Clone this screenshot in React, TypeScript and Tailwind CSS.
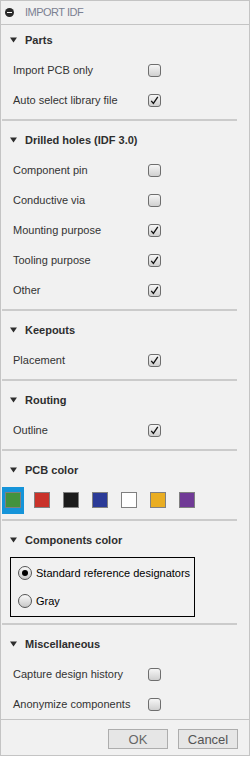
import React from 'react';

const font = { fontFamily: '"Liberation Sans", Arial, sans-serif' };

const Triangle = () => (
  <svg width="7" height="6" viewBox="0 0 7 6" className="mr-[8px]">
    <path d="M0 0.5 L7 0.5 L3.5 5.5 Z" fill="#2e2e2e" />
  </svg>
);

const Checkbox = ({ checked = false }: { checked?: boolean }) => (
  <div className="w-[13px] h-[13px] rounded-[3px] border border-[#6e6e6e] bg-gradient-to-b from-[#f6f6f6] to-[#cfcfcf] flex items-center justify-center">
    {checked && (
      <svg width="11" height="11" viewBox="0 0 11 11">
        <path d="M2.2 5.8 L4.4 8.4 L8.8 1.8" fill="none" stroke="#111" strokeWidth="1.3" />
      </svg>
    )}
  </div>
);

const Radio = ({ checked = false }: { checked?: boolean }) => (
  <div className="w-[14px] h-[14px] rounded-full border border-[#555] bg-gradient-to-b from-[#fafafa] to-[#c8c8c8] flex items-center justify-center">
    {checked && <div className="w-[6px] h-[6px] rounded-full bg-black" />}
  </div>
);

const SectionHeader = ({ title }: { title: string }) => (
  <div className="h-[30px] flex items-center pl-[9px] text-[11px] font-bold text-[#2e2e2e]">
    <Triangle />
    {title}
  </div>
);

const Row = ({ label, checked }: { label: string; checked?: boolean }) => (
  <div className="h-[30px] flex items-center pl-[12px] text-[11px] text-[#333]">
    <span className="w-[135px]">{label}</span>
    <Checkbox checked={checked} />
  </div>
);

const Separator = () => <div className="ml-[1px] my-[4px] w-[235px] h-[2px] bg-[#cbcbcb]" />;

const swatches = ['#43933f', '#c9322a', '#1b1b1b', '#2b3a97', '#ffffff', '#e9ad22', '#703a96'];

export default function App() {
  return (
    <div style={font} className="w-[250px] border border-[#c4c4c4] bg-[#f1f1f1]">
      <div className="h-[24px] border-b border-[#c4c4c4] flex items-center pl-[4px]">
        <div className="w-[9px] h-[9px] rounded-full bg-[#2a2a2a] flex items-center justify-center">
          <div className="w-[5px] h-[1.5px] bg-white" />
        </div>
        <span className="ml-[11px] text-[11px] text-[#7b8092] tracking-[-0.5px]">IMPORT IDF</span>
      </div>

      <SectionHeader title="Parts" />
      <Row label="Import PCB only" />
      <Row label="Auto select library file" checked />
      <Separator />

      <SectionHeader title="Drilled holes (IDF 3.0)" />
      <Row label="Component pin" />
      <Row label="Conductive via" />
      <Row label="Mounting purpose" checked />
      <Row label="Tooling purpose" checked />
      <Row label="Other" checked />
      <Separator />

      <SectionHeader title="Keepouts" />
      <Row label="Placement" checked />
      <Separator />

      <SectionHeader title="Routing" />
      <Row label="Outline" checked />
      <Separator />

      <SectionHeader title="PCB color" />
      <div className="h-[30px] flex items-center pl-[1px] gap-[7px]">
        {swatches.map((c, i) => (
          <div
            key={c}
            className={`w-[22px] h-[27px] flex items-center justify-center ${i === 0 ? 'bg-[#1594d9]' : ''}`}
          >
            <div className="w-[16px] h-[16px] border border-[#808080]" style={{ backgroundColor: c }} />
          </div>
        ))}
      </div>
      <Separator />

      <SectionHeader title="Components color" />
      <div className="pt-[2px] pb-[2px] pl-[9px]">
        <div className="w-[185px] h-[60px] border border-black flex flex-col justify-center gap-[11px] pl-[7px] text-[11px] text-black">
          <div className="flex items-center gap-[4px]">
            <Radio checked />
            <span>Standard reference designators</span>
          </div>
          <div className="flex items-center gap-[4px]">
            <Radio />
            <span>Gray</span>
          </div>
        </div>
      </div>
      <Separator />

      <SectionHeader title="Miscellaneous" />
      <Row label="Capture design history" />
      <Row label="Anonymize components" />

      <div className="h-[36px] border-t border-[#c4c4c4] flex justify-end items-start pt-[9px] pr-[11px] gap-[10px]">
        <button className="w-[60px] h-[20px] border border-[#adadad] bg-[#e6e6e6] text-[13px] text-[#666]">OK</button>
        <button className="w-[60px] h-[20px] border border-[#adadad] bg-[#e6e6e6] text-[13px] text-[#555]">Cancel</button>
      </div>
    </div>
  );
}
